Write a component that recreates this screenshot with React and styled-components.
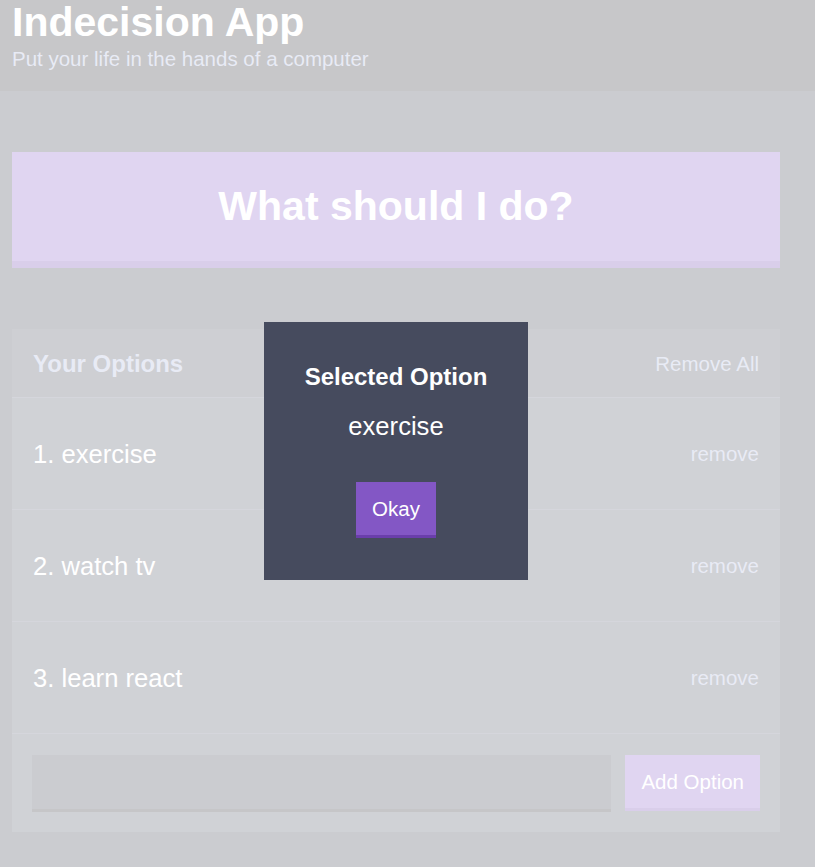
import React from "react";
import styled, { createGlobalStyle } from "styled-components";

const GlobalStyle = createGlobalStyle`
  html, body {
    margin: 0;
    padding: 0;
    background: #333745;
  }
  body {
    font-family: "Liberation Sans", Arial, sans-serif;
    color: #ffffff;
  }
  * { box-sizing: border-box; }
`;

const Header = styled.header`
  background: #20222b;
  padding: 0 12px 20px;
`;

const Title = styled.h1`
  margin: 0;
  font-size: 41px;
  line-height: 45px;
  font-weight: 700;
  color: #ffffff;
`;

const Subtitle = styled.h2`
  margin: 2px 0 0;
  font-size: 20.5px;
  line-height: 24px;
  font-weight: 400;
  color: #a5afd7;
`;

const Container = styled.main`
  width: 768px;
  margin: 61px 0 0 12px;
`;

const BigButton = styled.button`
  display: block;
  width: 100%;
  margin: 0 0 61px;
  padding: 31px 0;
  border: none;
  border-bottom: 7px solid #6a3eab;
  background: #8357c5;
  color: #ffffff;
  font-family: inherit;
  font-size: 41px;
  line-height: 47px;
  font-weight: 700;
  text-align: center;
`;

const Widget = styled.section`
  background: #464b5e;
`;

const WidgetHeader = styled.div`
  display: flex;
  align-items: center;
  justify-content: space-between;
  padding: 21px 21px 19px;
  background: #3c4251;
  border-bottom: 1px solid #575d75;
`;

const WidgetTitle = styled.h3`
  margin: 0;
  font-size: 24px;
  line-height: 28px;
  font-weight: 700;
  color: #a5afd7;
`;

const LinkButton = styled.button`
  background: none;
  border: none;
  padding: 0;
  font-family: inherit;
  font-size: 20.5px;
  line-height: 24px;
  color: #a5afd7;
`;

const OptionRow = styled.div`
  display: flex;
  align-items: center;
  justify-content: space-between;
  height: 112px;
  padding: 0 21px;
  border-bottom: 1px solid #575d75;
`;

const OptionText = styled.p`
  margin: 0;
  font-size: 25.6px;
  line-height: 30px;
  color: #ffffff;
`;

const AddForm = styled.form`
  display: flex;
  align-items: flex-start;
  padding: 21px 20px 20px;
`;

const Input = styled.input`
  flex: 1;
  height: 57px;
  margin-right: 14px;
  padding: 0 15px;
  background: #333745;
  border: none;
  border-bottom: 3px solid #1d1f27;
  color: #a5afd7;
  font-family: inherit;
  font-size: 20.5px;
  outline: none;
`;

const Button = styled.button`
  padding: 15px 16px;
  background: #8357c5;
  border: none;
  border-bottom: 3px solid #6a3eab;
  color: #ffffff;
  font-family: inherit;
  font-size: 20.5px;
  line-height: 23px;
`;

const Overlay = styled.div`
  position: fixed;
  inset: 0;
  background: rgba(255, 255, 255, 0.75);
`;

const Modal = styled.div`
  position: absolute;
  left: 264px;
  top: 322px;
  width: 264px;
  padding: 41px 0 42px;
  background: #464b5e;
  color: #ffffff;
  text-align: center;
`;

const ModalTitle = styled.h3`
  margin: 0 0 20px;
  font-size: 24px;
  line-height: 28px;
  font-weight: 700;
`;

const ModalBody = styled.p`
  margin: 0 0 41px;
  font-size: 25.6px;
  line-height: 30px;
`;

const options = ["exercise", "watch tv", "learn react"];

export default function App() {
  return (
    <>
      <GlobalStyle />
      <Header>
        <Title>Indecision App</Title>
        <Subtitle>Put your life in the hands of a computer</Subtitle>
      </Header>
      <Container>
        <BigButton>What should I do?</BigButton>
        <Widget>
          <WidgetHeader>
            <WidgetTitle>Your Options</WidgetTitle>
            <LinkButton>Remove All</LinkButton>
          </WidgetHeader>
          {options.map((o, i) => (
            <OptionRow key={o}>
              <OptionText>
                {i + 1}. {o}
              </OptionText>
              <LinkButton>remove</LinkButton>
            </OptionRow>
          ))}
          <AddForm onSubmit={(e) => e.preventDefault()}>
            <Input type="text" name="option" />
            <Button>Add Option</Button>
          </AddForm>
        </Widget>
      </Container>
      <Overlay>
        <Modal>
          <ModalTitle>Selected Option</ModalTitle>
          <ModalBody>exercise</ModalBody>
          <Button>Okay</Button>
        </Modal>
      </Overlay>
    </>
  );
}
